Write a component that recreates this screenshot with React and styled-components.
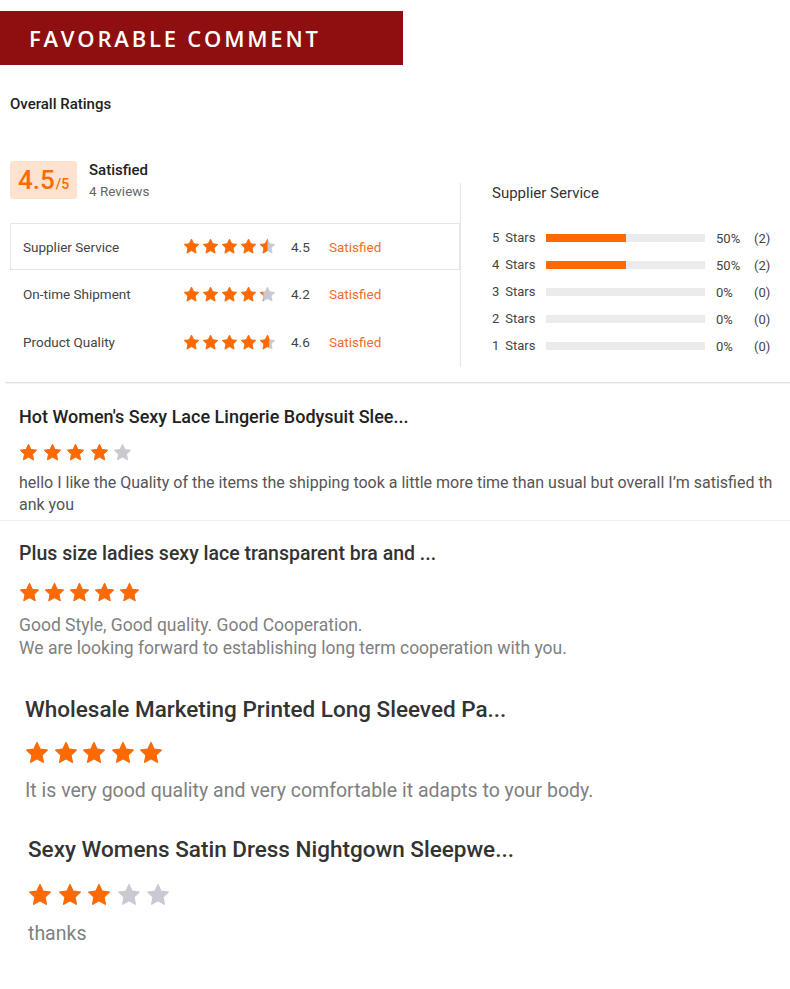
import React, { useId } from "react"
import styled, { createGlobalStyle } from "styled-components"

const GlobalStyle = createGlobalStyle`
  body {
    margin: 0;
    background: #fff;
    font-family: Roboto, "Liberation Sans", Arial, sans-serif;
  }
`

const ORANGE = "#ff6a00"
const GREY_STAR = "#c9c9d2"
const STAR_PATH =
  "M12 1.6l3.1 6.6 7.2.9-5.3 5 1.4 7.2L12 17.8l-6.4 3.5 1.4-7.2-5.3-5 7.2-.9z"

const Page = styled.div`
  width: 790px;
  padding-top: 11px;
`

const Banner = styled.div`
  width: 403px;
  height: 54px;
  background: #8f0e10;
  display: flex;
  align-items: center;
  padding-left: 29px;
  box-sizing: border-box;
  color: #fff;
  font-family: "Open Sans", "Liberation Sans", sans-serif;
  font-weight: 600;
  font-size: 22px;
  letter-spacing: 2.8px;
`

const SectionTitle = styled.div`
  margin: 29px 0 0 10px;
  font-size: 15px;
  line-height: 20px;
  font-weight: 500;
  color: #222;
`

const Ratings = styled.div`
  display: flex;
  align-items: flex-start;
  margin-top: 47px;
  padding-left: 10px;
`

const LeftCol = styled.div`
  width: 450px;
`

const Summary = styled.div`
  display: flex;
  align-items: flex-start;
  height: 62px;
`

const ScoreBox = styled.div`
  width: 67px;
  height: 38px;
  background: #fde2d0;
  border-radius: 3px;
  display: flex;
  align-items: baseline;
  justify-content: center;
  box-sizing: border-box;
  padding-top: 4px;
  color: ${ORANGE};
  font-size: 26px;
  line-height: 30px;
  font-weight: 500;
  small {
    font-size: 14px;
    font-weight: 500;
    margin-left: 1px;
  }
`

const SummaryText = styled.div`
  margin-left: 12px;
  display: flex;
  flex-direction: column;
`

const SummaryMain = styled.div`
  font-size: 15px;
  line-height: 18px;
  font-weight: 500;
  color: #222;
`

const SummarySub = styled.div`
  margin-top: 3px;
  font-size: 13.5px;
  line-height: 18px;
  color: #666;
`

const ScoreRow = styled.div`
  display: flex;
  align-items: center;
  height: ${p => (p.$boxed ? "47px" : "48px")};
  padding-left: 12px;
  box-sizing: border-box;
  border: 1px solid ${p => (p.$boxed ? "#e6e6e6" : "transparent")};
  font-size: 13.5px;
  color: #444;
`

const ScoreLabel = styled.div`
  width: 160px;
`

const ScoreValue = styled.div`
  width: 38px;
  padding-left: 15px;
  color: #444;
`

const ScoreState = styled.div`
  color: #f46b2a;
`

const RightCol = styled.div`
  margin-top: 22px;
  border-left: 1px solid #e6e6e6;
  height: 184px;
  padding-left: 31px;
  box-sizing: border-box;
  flex: 1;
`

const PanelTitle = styled.div`
  font-size: 15px;
  line-height: 20px;
  color: #333;
  margin-bottom: 21px;
`

const BarRow = styled.div`
  display: flex;
  align-items: center;
  height: 27px;
  font-size: 13px;
  color: #444;
`

const BarLabel = styled.div`
  width: 54px;
  span {
    margin-right: 6px;
  }
`

const Track = styled.div`
  width: 159px;
  height: 8px;
  background: #ebebee;
`

const Fill = styled.div`
  height: 100%;
  background: ${ORANGE};
`

const Pct = styled.div`
  width: 38px;
  margin-left: 11px;
  padding-top: 2px;
`

const Count = styled.div`
  padding-top: 1px;
`

const Divider = styled.div`
  margin: 15px 0 0 5px;
  height: 1px;
  background: #e3e3e3;
  box-shadow: 0 1px 1px #f2f2f2;
`

const Review = styled.div`
  padding: ${p => p.$top}px 0 0 ${p => p.$left}px;
  border-bottom: ${p => (p.$line ? "1px solid #f0f0f0" : "none")};
  padding-bottom: ${p => p.$bottom}px;
`

const ReviewTitle = styled.div`
  font-size: ${p => p.$size}px;
  line-height: ${p => p.$lh}px;
  font-weight: 500;
  color: ${p => p.$color};
  white-space: nowrap;
`

const ReviewStars = styled.div`
  margin: ${p => p.$mt}px 0 ${p => p.$mb}px;
  display: flex;
  gap: ${p => p.$gap}px;
`

const ReviewBody = styled.div`
  font-size: ${p => p.$size}px;
  line-height: ${p => p.$lh}px;
  color: ${p => p.$color};
  width: ${p => p.$width}px;
  word-break: break-all;
`

const StarRow = styled.div`
  display: flex;
  gap: 2px;
  width: 93px;
`

const StarSvg = styled.svg`
  display: block;
  flex: none;
`

function Star({ size, fill }) {
  const id = useId()
  return (
    <StarSvg width={size} height={size} viewBox="0 0 24 24">
      <defs>
        <clipPath id={id}>
          <rect x="0" y="0" width={24 * fill} height="24" />
        </clipPath>
      </defs>
      <path d={STAR_PATH} fill={GREY_STAR} stroke={GREY_STAR} strokeWidth="1.2" strokeLinejoin="round" />
      <path d={STAR_PATH} fill={ORANGE} stroke={ORANGE} strokeWidth="1.2" strokeLinejoin="round" clipPath={`url(#${id})`} />
    </StarSvg>
  )
}

const stars = (value, size) =>
  [0, 1, 2, 3, 4].map(i => (
    <Star key={i} size={size} fill={Math.max(0, Math.min(1, value - i))} />
  ))

const scores = [
  { label: "Supplier Service", value: 4.5, fill: 4.5 },
  { label: "On-time Shipment", value: 4.2, fill: 4.25 },
  { label: "Product Quality", value: 4.6, fill: 4.6 },
]

const bars = [
  { n: 5, pct: 50, count: 2 },
  { n: 4, pct: 50, count: 2 },
  { n: 3, pct: 0, count: 0 },
  { n: 2, pct: 0, count: 0 },
  { n: 1, pct: 0, count: 0 },
]

const reviews = [
  {
    title: "Hot Women's Sexy Lace Lingerie Bodysuit Slee...",
    rating: 4,
    body: "hello I like the Quality of the items the shipping took a little more time than usual but overall I’m satisfied thank you",
    left: 19, top: 22, bottom: 4, line: true,
    titleSize: 18, titleLh: 24, titleColor: "#222",
    starSize: 19, starGap: 4.5, starMt: 14, starMb: 10,
    bodySize: 16, bodyLh: 22, bodyColor: "#555", bodyWidth: 760,
  },
  {
    title: "Plus size ladies sexy lace transparent bra and ...",
    rating: 5,
    body: "Good Style, Good quality. Good Cooperation.\nWe are looking forward to establishing long term cooperation with you.",
    left: 19, top: 21, bottom: 0,
    titleSize: 19.5, titleLh: 24, titleColor: "#333",
    starSize: 21, starGap: 4, starMt: 16, starMb: 11,
    bodySize: 17.5, bodyLh: 23, bodyColor: "#808080", bodyWidth: 700,
  },
  {
    title: "Wholesale Marketing Printed Long Sleeved Pa...",
    rating: 5,
    body: "It is very good quality and very comfortable it adapts to your body.",
    left: 25, top: 35, bottom: 0,
    titleSize: 22.5, titleLh: 28, titleColor: "#333",
    starSize: 24, starGap: 4.5, starMt: 18, starMb: 14,
    bodySize: 19.5, bodyLh: 24, bodyColor: "#808080", bodyWidth: 720,
  },
  {
    title: "Sexy Womens Satin Dress Nightgown Sleepwe...",
    rating: 3,
    body: "thanks",
    left: 28, top: 32, bottom: 0,
    titleSize: 22.5, titleLh: 28, titleColor: "#333",
    starSize: 24, starGap: 5.5, starMt: 20, starMb: 15,
    bodySize: 19.5, bodyLh: 24, bodyColor: "#808080", bodyWidth: 700,
  },
]

export default function App() {
  return (
    <>
      <GlobalStyle />
      <Page>
        <Banner>FAVORABLE COMMENT</Banner>
        <SectionTitle>Overall Ratings</SectionTitle>
        <Ratings>
          <LeftCol>
            <Summary>
              <ScoreBox>
                4.5<small>/5</small>
              </ScoreBox>
              <SummaryText>
                <SummaryMain>Satisfied</SummaryMain>
                <SummarySub>4 Reviews</SummarySub>
              </SummaryText>
            </Summary>
            {scores.map((s, i) => (
              <ScoreRow key={s.label} $boxed={i === 0}>
                <ScoreLabel>{s.label}</ScoreLabel>
                <StarRow>{stars(s.fill, 17)}</StarRow>
                <ScoreValue>{s.value}</ScoreValue>
                <ScoreState>Satisfied</ScoreState>
              </ScoreRow>
            ))}
          </LeftCol>
          <RightCol>
            <PanelTitle>Supplier Service</PanelTitle>
            {bars.map(b => (
              <BarRow key={b.n}>
                <BarLabel>
                  <span>{b.n}</span>Stars
                </BarLabel>
                <Track>
                  <Fill style={{ width: `${b.pct}%` }} />
                </Track>
                <Pct>{b.pct}%</Pct>
                <Count>({b.count})</Count>
              </BarRow>
            ))}
          </RightCol>
        </Ratings>
        <Divider />
        {reviews.map(r => (
          <Review key={r.title} $left={r.left} $top={r.top} $bottom={r.bottom} $line={r.line}>
            <ReviewTitle $size={r.titleSize} $lh={r.titleLh} $color={r.titleColor}>
              {r.title}
            </ReviewTitle>
            <ReviewStars $gap={r.starGap} $mt={r.starMt} $mb={r.starMb}>
              {stars(r.rating, r.starSize)}
            </ReviewStars>
            <ReviewBody $size={r.bodySize} $lh={r.bodyLh} $color={r.bodyColor} $width={r.bodyWidth}>
              {r.body.split("\n").map(line => (
                <div key={line}>{line}</div>
              ))}
            </ReviewBody>
          </Review>
        ))}
      </Page>
    </>
  )
}
